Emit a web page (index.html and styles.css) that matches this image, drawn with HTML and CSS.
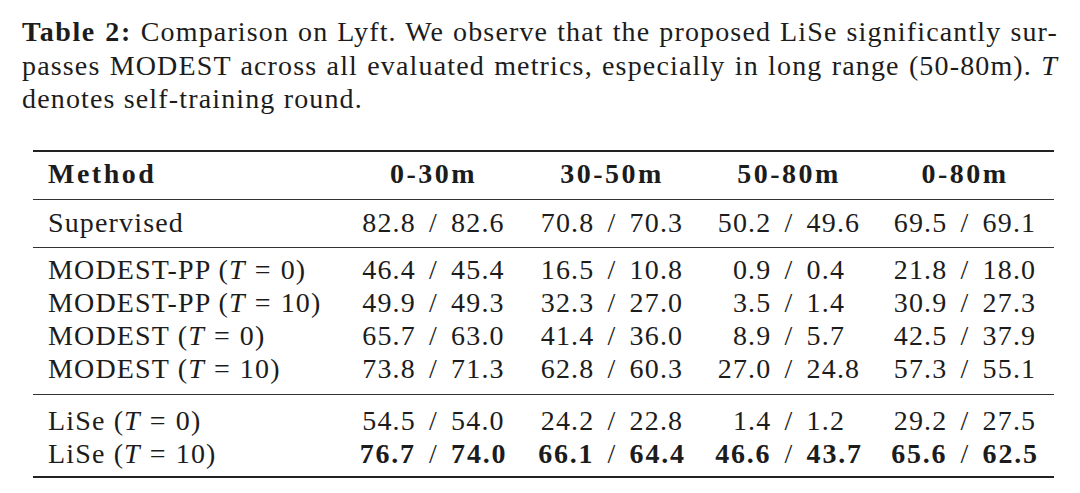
FILE: index.html
```html
<!DOCTYPE html>
<html>
<head>
<meta charset="utf-8">
<link rel="stylesheet" href="styles.css">
</head>
<body>
<div class="page">
  <div class="caption">
    <div class="cline"><b>Table 2:</b> Comparison on Lyft. We observe that the proposed LiSe significantly sur-</div>
    <div class="cline">passes MODEST across all evaluated metrics, especially in long range (50-80m). <i>T</i></div>
    <div class="cline last">denotes self-training round.</div>
  </div>

  <div class="tbl">
    <div class="grp head">
      <div class="row">
        <div class="c1">Method</div>
        <div class="c">0-30m</div>
        <div class="c">30-50m</div>
        <div class="c">50-80m</div>
        <div class="c">0-80m</div>
      </div>
    </div>
    <div class="grp single">
      <div class="row">
        <div class="c1">Supervised</div>
        <div class="c">82.8 / 82.6</div>
        <div class="c">70.8 / 70.3</div>
        <div class="c">50.2 / 49.6</div>
        <div class="c">69.5 / 69.1</div>
      </div>
    </div>
    <div class="grp multi">
      <div class="row">
        <div class="c1">MODEST-PP (<i>T</i><span class="eq">=</span>0)</div>
        <div class="c">46.4 / 45.4</div>
        <div class="c">16.5 / 10.8</div>
        <div class="c">0.9 / 0.4</div>
        <div class="c">21.8 / 18.0</div>
      </div>
      <div class="row">
        <div class="c1">MODEST-PP (<i>T</i><span class="eq">=</span>10)</div>
        <div class="c">49.9 / 49.3</div>
        <div class="c">32.3 / 27.0</div>
        <div class="c">3.5 / 1.4</div>
        <div class="c">30.9 / 27.3</div>
      </div>
      <div class="row">
        <div class="c1">MODEST (<i>T</i><span class="eq">=</span>0)</div>
        <div class="c">65.7 / 63.0</div>
        <div class="c">41.4 / 36.0</div>
        <div class="c">8.9 / 5.7</div>
        <div class="c">42.5 / 37.9</div>
      </div>
      <div class="row">
        <div class="c1">MODEST (<i>T</i><span class="eq">=</span>10)</div>
        <div class="c">73.8 / 71.3</div>
        <div class="c">62.8 / 60.3</div>
        <div class="c">27.0 / 24.8</div>
        <div class="c">57.3 / 55.1</div>
      </div>
    </div>
    <div class="grp multi last">
      <div class="row">
        <div class="c1">LiSe (<i>T</i><span class="eq">=</span>0)</div>
        <div class="c">54.5 / 54.0</div>
        <div class="c">24.2 / 22.8</div>
        <div class="c">1.4 / 1.2</div>
        <div class="c">29.2 / 27.5</div>
      </div>
      <div class="row">
        <div class="c1">LiSe (<i>T</i><span class="eq">=</span>10)</div>
        <div class="c"><b>76.7</b> / <b>74.0</b></div>
        <div class="c"><b>66.1</b> / <b>64.4</b></div>
        <div class="c"><b>46.6</b> / <b>43.7</b></div>
        <div class="c"><b>65.6</b> / <b>62.5</b></div>
      </div>
    </div>
  </div>
</div>
</body>
</html>
```

FILE: styles.css
```css
html, body {
  margin: 0;
  padding: 0;
  background: #ffffff;
}

.page {
  font-family: "Liberation Serif", "Times New Roman", serif;
  font-size: 28px;
  color: #1c1c1c;
  letter-spacing: 1.15px;
  padding: 15px 22px 0 22px;
}

.caption {
  width: 1036px;
  line-height: 33.5px;
}

.cline {
  text-align: justify;
  text-align-last: justify;
  white-space: nowrap;
}

.cline.last {
  text-align-last: left;
}

.caption b {
  font-weight: 700;
  letter-spacing: 1.6px;
}

.tbl {
  width: 1021px;
  margin-left: 11px;
  margin-top: 34px;
  border-top: 2px solid #222;
  border-bottom: 2px solid #222;
}

.grp + .grp {
  border-top: 1.5px solid #333;
}

.grp.head {
  padding: 5px 0 9.5px 0;
}

.grp.single {
  padding: 5.5px 0 7.5px 0;
}

.grp.multi {
  padding: 5px 0 8px 0;
}

.grp.multi.last {
  padding: 9px 0 5.5px 0;
}

.row {
  display: grid;
  grid-template-columns: 312px 177px 180px 174px 178px;
  line-height: 33.3px;
  white-space: nowrap;
}

.c1 {
  padding-left: 15px;
}

.c {
  text-align: center;
  word-spacing: 5px;
}

.head .c1,
.head .c {
  font-weight: 700;
  letter-spacing: 2.5px;
}

.eq {
  margin: 0 9px;
}

b {
  font-weight: 700;
  letter-spacing: 1.8px;
}
```
